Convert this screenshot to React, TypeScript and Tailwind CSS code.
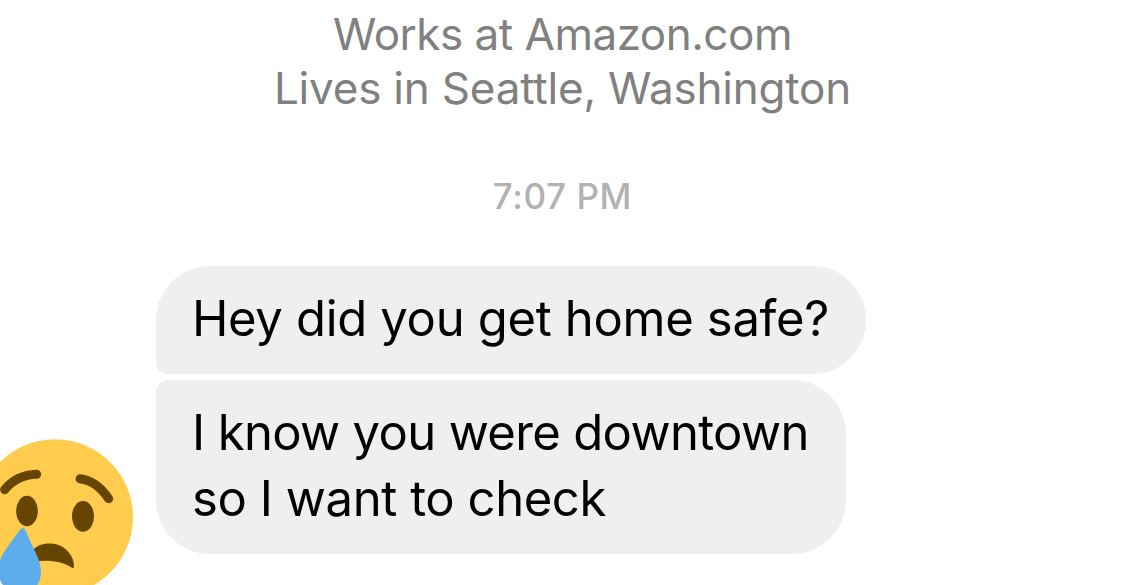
import { FC } from "react";

// メッセージの型
type Message = {
  id: number;
  lines: { text: string; className: string }[];
  className: string;
};

// メッセージ一覧
const messages: Message[] = [
  {
    id: 1,
    lines: [{ text: "Hey did you get home safe?", className: "tracking-[-0.33px]" }],
    className: "h-[108px] w-[710px] rounded-l-[54px] rounded-r-[54px] rounded-bl-[12px]",
  },
  {
    id: 2,
    lines: [
      { text: "I know you were downtown", className: "tracking-[-0.65px]" },
      { text: "so I want to check", className: "tracking-[-0.42px]" },
    ],
    className: "h-[174px] w-[690px] rounded-[54px] rounded-tl-[12px]",
  },
];

// 泣き顔のアイコン
const CryingFace: FC = () => {
  return (
    <svg viewBox="0 42 399 438" className="h-[146px] w-[133px]">
      <circle cx="165" cy="277" r="234" fill="#ffcc4d" />
      {/* 眉 */}
      <g fill="none" stroke="#664500" strokeWidth="27" strokeLinecap="round">
        <path d="M14 194Q50 150 110 148" />
        <path d="M240 161Q290 167 326 221" />
      </g>
      {/* 目と口 */}
      <g fill="#664500">
        <ellipse cx="81" cy="258" rx="32.5" ry="46" />
        <ellipse cx="249" cy="274" rx="33" ry="46" />
        <path d="M100 374C120 353 151 354 169 358C203 366 224 401 222 425C221 430 216 430 212 426C185 409 145 403 100 410Z" />
      </g>
      {/* 涙 */}
      <path
        d="M69 309C74 309 77 316 80 323C94 361 123 404 123 438C123 485 93 508 54 504C16 500 -9 467 -6 431C-4 393 40 342 58 317Q64 309 69 309Z"
        fill="#5dadec"
      />
    </svg>
  );
};

const App: FC = () => {
  return (
    <div className="flex h-[585px] w-[1125px] flex-col overflow-hidden bg-white font-['Inter',sans-serif]">
      {/* プロフィール */}
      <div className="flex flex-col items-center pt-[7px] text-[44px] leading-[54px] text-[#808080]">
        <p className="tracking-[-0.5px] whitespace-nowrap">Works at Amazon.com</p>
        <p className="tracking-[-0.2px] whitespace-nowrap">Lives in Seattle, Washington</p>
      </div>
      {/* 受信時刻 */}
      <p className="mt-[61px] text-center text-[35px] leading-[40px] font-medium tracking-[0.6px] text-[#b2b2b2]">
        7:07 PM
      </p>
      {/* メッセージ一覧 */}
      <div className="mt-[50px] flex flex-1">
        <div className="flex w-[156px] shrink-0 items-end">
          <CryingFace />
        </div>
        <div className="flex flex-col gap-[6px]">
          {messages.map((message) => {
            return (
              <div
                key={message.id}
                className={`bg-[#efefef] pt-5 pl-[36px] text-[49px] leading-[66px] text-black ${message.className}`}
              >
                {message.lines.map((line) => {
                  return (
                    <p key={line.text} className={`whitespace-nowrap ${line.className}`}>
                      {line.text}
                    </p>
                  );
                })}
              </div>
            );
          })}
        </div>
      </div>
    </div>
  );
};
export default App;
